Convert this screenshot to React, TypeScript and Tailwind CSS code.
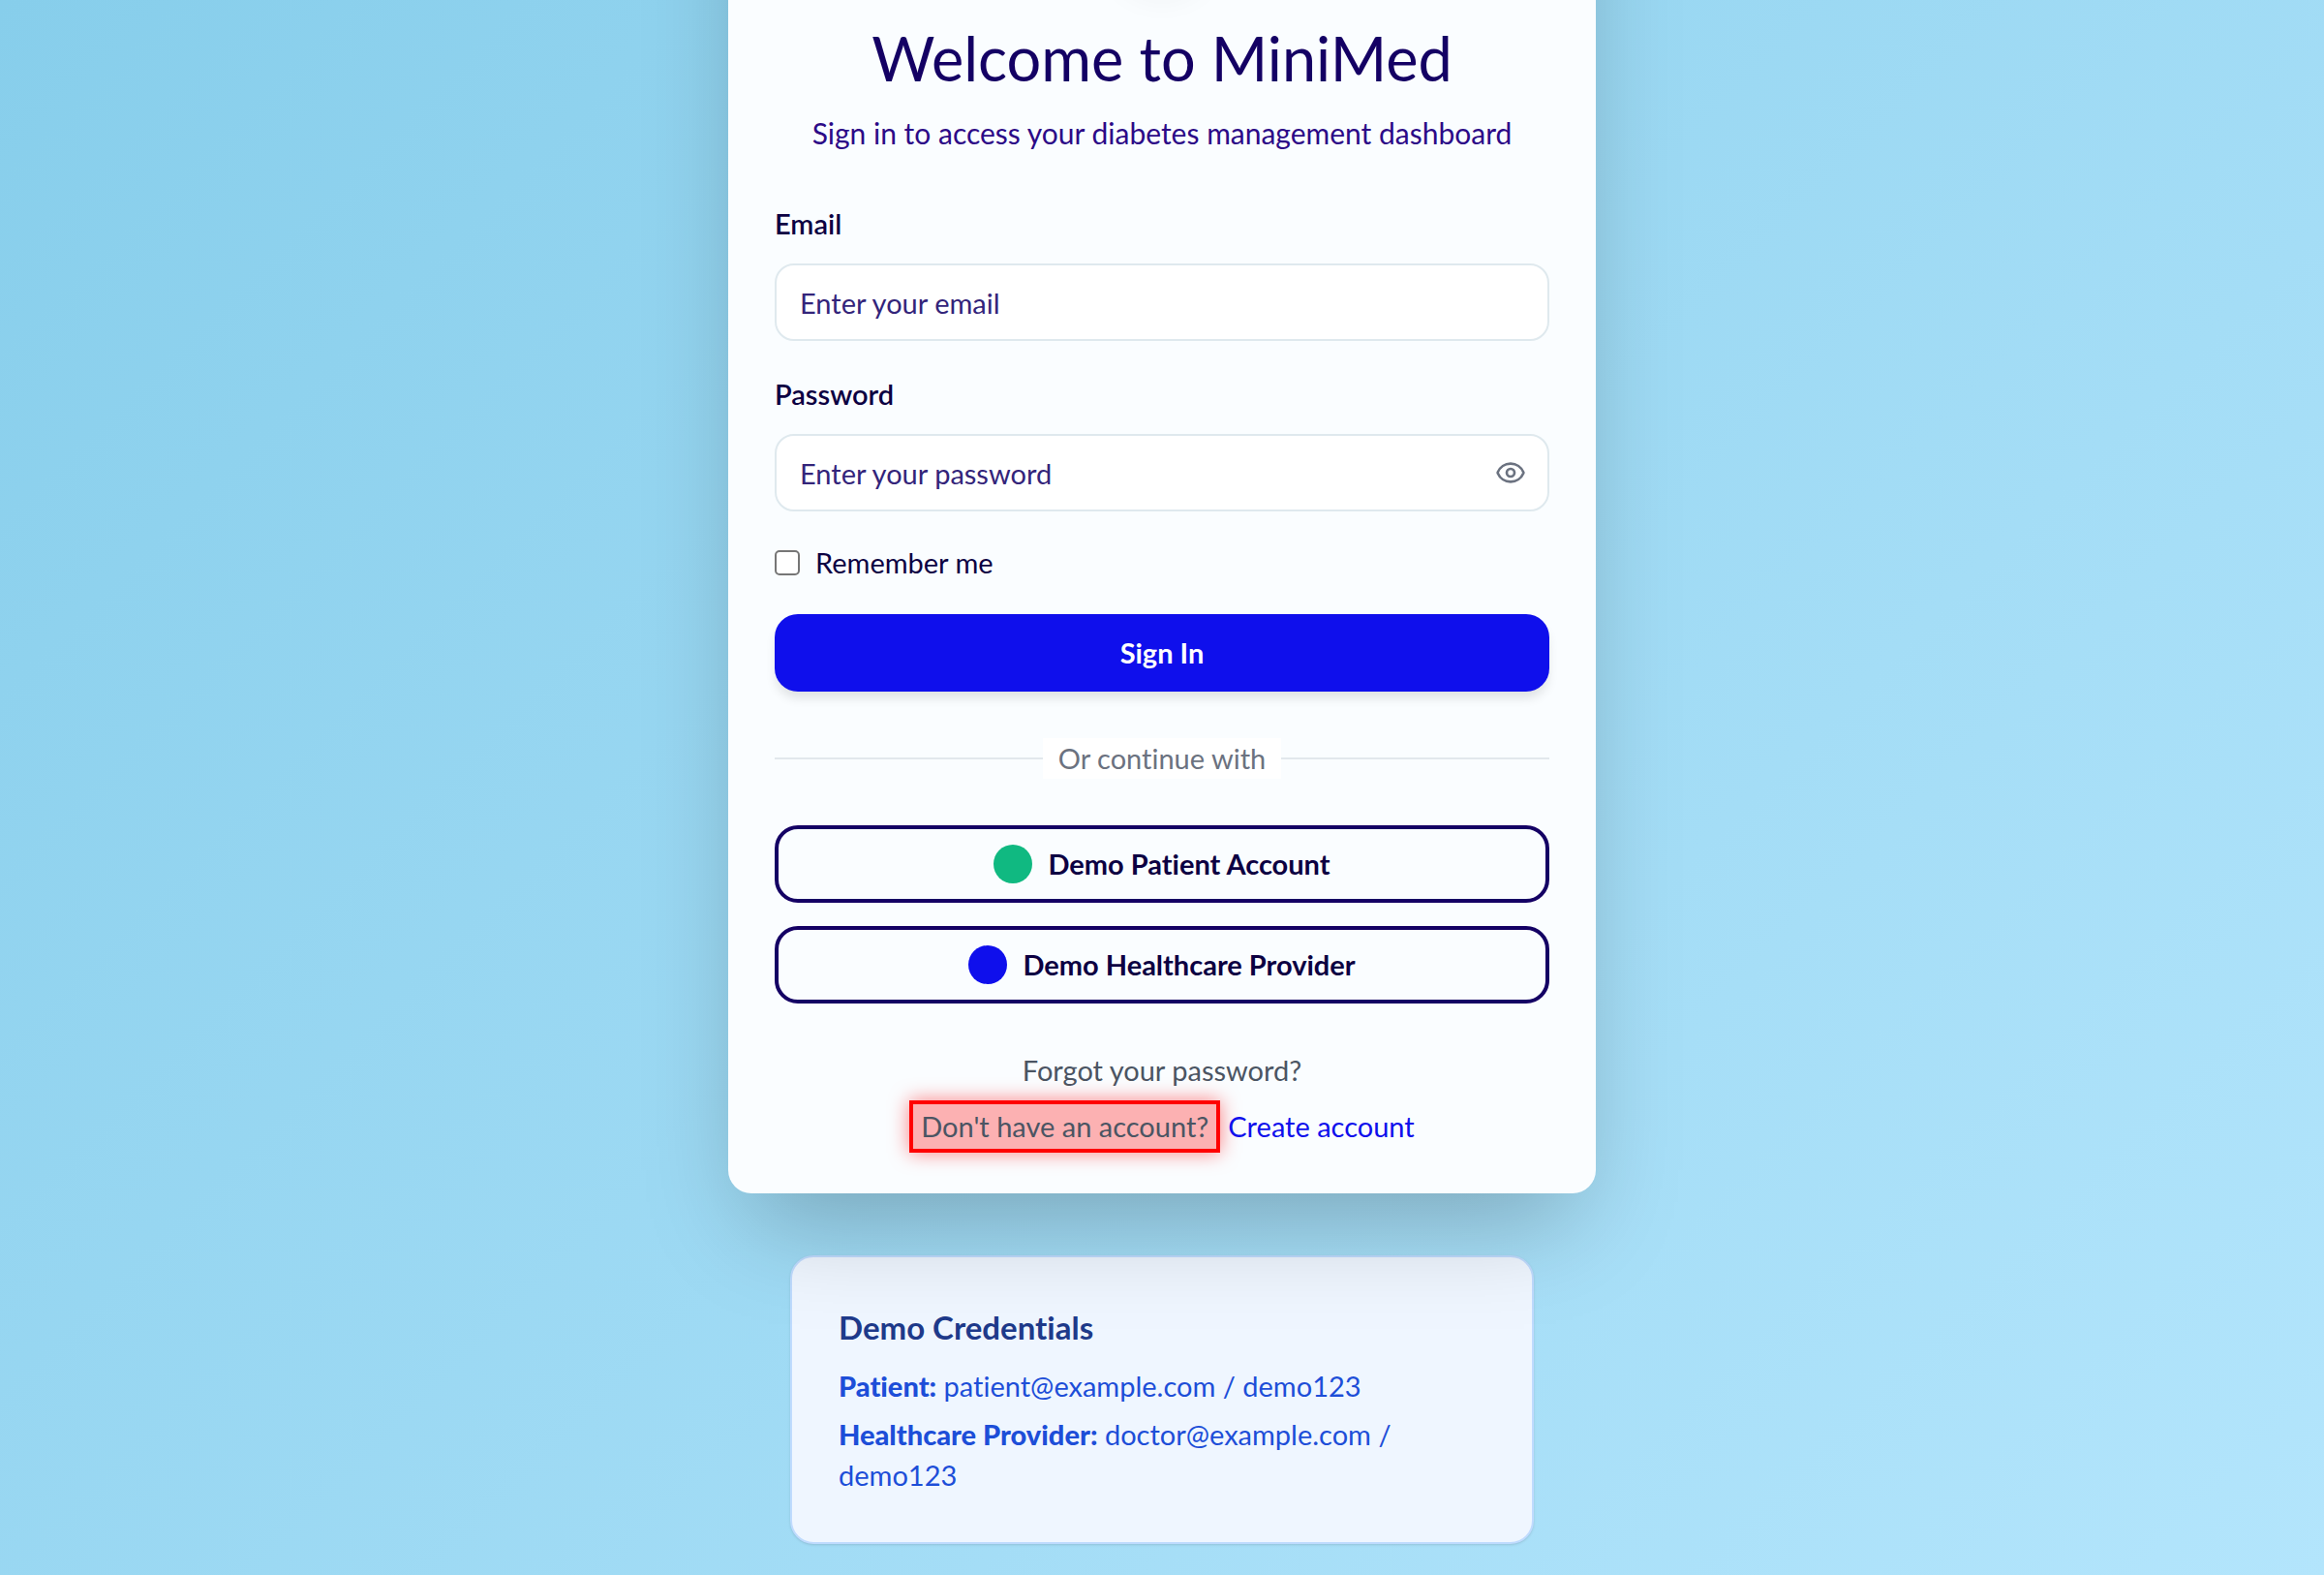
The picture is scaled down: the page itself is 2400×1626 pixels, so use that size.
import { useState } from "react";
import { Eye, EyeOff } from "lucide-react";

function DemoButton({ label, dot }: { label: string; dot: string }) {
  return (
    <button
      type="button"
      className="flex h-20 w-full items-center justify-center gap-4 rounded-3xl border-4 border-[#140064] font-bold text-[#0c0042]"
    >
      <span className={"size-10 rounded-full " + dot} />
      {label}
    </button>
  );
}

export default function App() {
  const [shown, setShown] = useState(false);
  return (
    <main className="flex min-h-screen flex-col items-center overflow-hidden bg-linear-135 from-[#87ceeb] to-[#b3e5fc] font-[Lato,sans-serif] text-[29px] leading-[42px] [font-variant-ligatures:none]">
      <section className="relative z-10 -mt-47 w-full max-w-4xl rounded-3xl bg-[#fafdff] px-12 pt-12 pb-[42px] shadow-[0_50px_100px_-24px_rgba(0,0,0,0.25)]">
        <header className="flex flex-col items-center text-center">
          <div className="mb-8 size-32 rounded-full bg-white shadow-[0_20px_30px_-6px_rgba(0,0,0,0.04)]" />
          <h1 className="text-[63px] leading-[80px] text-[#140064]">Welcome to MiniMed</h1>
          <p className="mt-4 text-[30px] text-[#2c0a87]">Sign in to access your diabetes management dashboard</p>
        </header>

        <form className="mt-13" onSubmit={(e) => e.preventDefault()}>
          <label htmlFor="email" className="block font-semibold text-[#0c0042]">
            Email
          </label>
          <input
            id="email"
            type="email"
            placeholder="Enter your email"
            className="mt-5 block h-20 w-full rounded-[20px] border-2 border-[#dfe9ee] bg-white px-6 placeholder:text-[#33247a]"
          />
          <label htmlFor="password" className="mt-[34px] block font-semibold text-[#0c0042]">
            Password
          </label>
          <div className="relative mt-5">
            <input
              id="password"
              type={shown ? "text" : "password"}
              placeholder="Enter your password"
              className="block h-20 w-full rounded-[20px] border-2 border-[#dfe9ee] bg-white px-6 placeholder:text-[#33247a]"
            />
            <button
              type="button"
              aria-label="Show password"
              onClick={() => setShown(!shown)}
              className="absolute inset-y-0 right-6 text-[#6b7280]"
            >
              {shown ? <EyeOff size={32} /> : <Eye size={32} />}
            </button>
          </div>
          <label className="mt-8 flex items-center gap-4 text-[#0c0042]">
            <input
              type="checkbox"
              className="size-[26px] appearance-none rounded-[5px] border-2 border-[#767676] bg-white checked:bg-[#0f0fec]"
            />
            Remember me
          </label>
          <button
            type="submit"
            className="mt-8 h-20 w-full rounded-3xl bg-[#0f0fec] font-bold text-white shadow-[0_8px_12px_-2px_rgba(0,0,0,0.12)]"
          >
            Sign In
          </button>
        </form>

        <div className="my-12 flex items-center">
          <span className="h-0.5 flex-1 bg-[#e2e8ec]" />
          <span className="bg-white px-4 text-[#6b7280]">Or continue with</span>
          <span className="h-0.5 flex-1 bg-[#e2e8ec]" />
        </div>

        <div className="flex flex-col gap-6">
          <DemoButton label="Demo Patient Account" dot="bg-[#10b981]" />
          <DemoButton label="Demo Healthcare Provider" dot="bg-[#0f0fec]" />
        </div>

        <footer className="mt-12 flex flex-col items-center gap-2.5 text-[#4b5563]">
          <a href="#forgot">Forgot your password?</a>
          <p className="flex items-center gap-2">
            <span className="border-4 border-[#ff0000] bg-[#ff0000]/30 px-2 py-0.5 shadow-[0_0_20px_rgba(255,0,0,0.5)]">
              Don't have an account?
            </span>
            <a href="#create" className="text-[#0f0fec]">
              Create account
            </a>
          </p>
        </footer>
      </section>

      <aside className="mt-16 mb-8 w-full max-w-3xl rounded-3xl border-2 border-[#bfdbfe] bg-[#eff6ff] p-12 text-[#1d4ed8] shadow-sm">
        <h2 className="mb-4 text-[33px] leading-[48px] font-bold text-[#1e3a8a]">Demo Credentials</h2>
        <p>
          <strong className="font-black">Patient:</strong> patient@example.com / demo123
        </p>
        <p className="mt-2">
          <strong className="font-black">Healthcare Provider:</strong> doctor@example.com / demo123
        </p>
      </aside>
    </main>
  );
}
